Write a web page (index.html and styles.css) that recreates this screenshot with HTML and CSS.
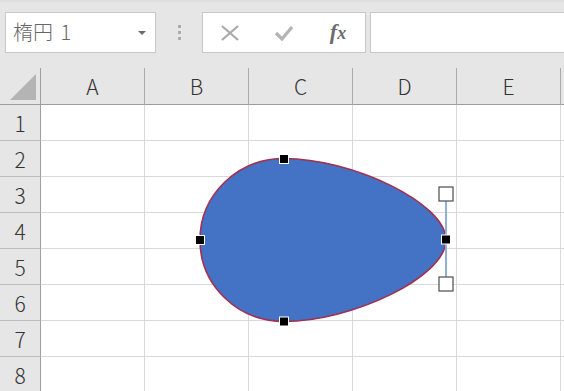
FILE: index.html
```html
<!DOCTYPE html>
<html lang="ja">
<head>
<meta charset="utf-8" />
<title>楕円 1</title>
<link rel="stylesheet" href="styles.css">
</head>
<body>
<div class="toolbar">
	<div class="name_box">
		<span class="name_text">楕円 1</span>
		<i class="name_arrow"></i>
	</div>
	<div class="grip"><b></b><b></b><b></b></div>
	<div class="fx_btns">
		<span class="fx_btn">
			<svg width="20" height="16" viewBox="0 0 20 16"><path d="M2 1 L18 15 M18 1 L2 15" stroke="#a9a9a9" stroke-width="2.2" fill="none"/></svg>
		</span>
		<span class="fx_btn">
			<svg width="20" height="16" viewBox="0 0 20 16"><path d="M2 8 L8 14 L18 2" stroke="#b3b3b3" stroke-width="3.2" fill="none"/></svg>
		</span>
		<span class="fx_btn fx_text">f<small>x</small></span>
	</div>
	<div class="formula_input"></div>
</div>

<div class="sheet">
	<div class="hd corner"><i></i></div>
	<div class="hd col">A</div>
	<div class="hd col">B</div>
	<div class="hd col">C</div>
	<div class="hd col">D</div>
	<div class="hd col">E</div>
	<div class="hd col last"></div>

	<div class="hd row">1</div><div class="cell"></div><div class="cell"></div><div class="cell"></div><div class="cell"></div><div class="cell"></div><div class="cell last"></div>
	<div class="hd row">2</div><div class="cell"></div><div class="cell"></div><div class="cell"></div><div class="cell"></div><div class="cell"></div><div class="cell last"></div>
	<div class="hd row">3</div><div class="cell"></div><div class="cell"></div><div class="cell"></div><div class="cell"></div><div class="cell"></div><div class="cell last"></div>
	<div class="hd row">4</div><div class="cell"></div><div class="cell"></div><div class="cell"></div><div class="cell"></div><div class="cell"></div><div class="cell last"></div>
	<div class="hd row">5</div><div class="cell"></div><div class="cell"></div><div class="cell"></div><div class="cell"></div><div class="cell"></div><div class="cell last"></div>
	<div class="hd row">6</div><div class="cell"></div><div class="cell"></div><div class="cell"></div><div class="cell"></div><div class="cell"></div><div class="cell last"></div>
	<div class="hd row">7</div><div class="cell"></div><div class="cell"></div><div class="cell"></div><div class="cell"></div><div class="cell"></div><div class="cell last"></div>
	<div class="hd row">8</div><div class="cell"></div><div class="cell"></div><div class="cell"></div><div class="cell"></div><div class="cell"></div><div class="cell last"></div>
</div>

<!-- 図形 (選択中) -->
<svg class="drawing" width="564" height="391" viewBox="0 0 564 391">
	<path d="M200,240 C200,194.7 237.6,158.5 284,158.5 C352,158.5 446,203 446,240 C446,277 352,321.5 284,321.5 C237.6,321.5 200,285.3 200,240 Z"
		fill="#4472c4" stroke="#a2304f" stroke-width="1.6"/>
	<line x1="446" y1="200" x2="446" y2="278" stroke="#8fb0d2" stroke-width="2"/>
	<rect x="439" y="187" width="14" height="14" fill="#fff" stroke="#5a5a5a" stroke-width="1.3"/>
	<rect x="439" y="277" width="14" height="14" fill="#fff" stroke="#5a5a5a" stroke-width="1.3"/>
	<rect x="279.5" y="154.5" width="9" height="9" fill="#000" stroke="#fff" stroke-width="1"/>
	<rect x="195.5" y="235.5" width="9" height="9" fill="#000" stroke="#fff" stroke-width="1"/>
	<rect x="441.5" y="235" width="9" height="9" fill="#000" stroke="#fff" stroke-width="1"/>
	<rect x="279.5" y="317" width="9" height="9" fill="#000" stroke="#fff" stroke-width="1"/>
</svg>
</body>
</html>
```

FILE: styles.css
```css
html,body{margin:0;padding:0;}
body{width:564px;height:391px;overflow:hidden;position:relative;background:#fff;font-family:"Noto Sans CJK JP","Liberation Sans",sans-serif;}

.toolbar{height:68px;box-sizing:border-box;padding:12px 0 0 5px;display:flex;align-items:flex-start;background:linear-gradient(#dcdcdc 0,#e6e6e6 4px,#e6e6e6 100%);}
.name_box{width:151px;height:41px;box-sizing:border-box;border:1px solid #c9c9c9;background:#fff;display:flex;align-items:center;padding:0 0 2px 7px;position:relative;}
.name_text{font-size:20px;color:#666;line-height:1;word-spacing:3px;font-weight:300;}
.name_arrow{position:absolute;right:9px;top:18px;width:0;height:0;border-left:4px solid transparent;border-right:4px solid transparent;border-top:4px solid #6a6a6a;}
.grip{width:46px;height:41px;display:flex;flex-direction:column;align-items:center;justify-content:center;gap:3px;}
.grip b{display:block;width:3px;height:3px;background:#acacac;}
.fx_btns{width:164px;height:41px;box-sizing:border-box;border:1px solid #c9c9c9;background:#fff;display:grid;grid-template-columns:repeat(3,1fr);align-items:center;justify-items:center;}
.fx_btn{display:flex;align-items:center;justify-content:center;height:100%;}
.fx_text{font-family:"Liberation Serif",serif;font-style:italic;font-weight:bold;font-size:22px;color:#6b6b6b;line-height:1;padding-bottom:2px;}
.fx_text small{font-size:18px;position:relative;top:1px;}
.formula_input{flex:1;height:41px;box-sizing:border-box;border:1px solid #c9c9c9;border-right:0;background:#fff;margin-left:4px;}

.sheet{display:grid;grid-template-columns:41px repeat(5,104px) 1fr;grid-template-rows:37px repeat(8,36px);}
.hd{background:#e6e6e6;color:#333;box-sizing:border-box;display:flex;align-items:center;justify-content:center;font-size:21px;line-height:1;font-weight:300;}
.corner{border-right:1px solid #9e9e9e;border-bottom:1px solid #9e9e9e;position:relative;}
.corner i{position:absolute;right:4px;bottom:4px;width:0;height:0;border-left:26px solid transparent;border-bottom:26px solid #b4b4b4;}
.col{border-right:1px solid #ababab;border-bottom:1px solid #9e9e9e;padding-top:1px;}
.col.last{border-right:0;}
.row{border-right:1px solid #9e9e9e;border-bottom:1px solid #bdbdbd;padding-top:1px;}
.cell{box-sizing:border-box;border-right:1px solid #d9d9d9;border-bottom:1px solid #d9d9d9;}
.cell.last{border-right:0;}

.drawing{position:absolute;left:0;top:0;pointer-events:none;}
```
